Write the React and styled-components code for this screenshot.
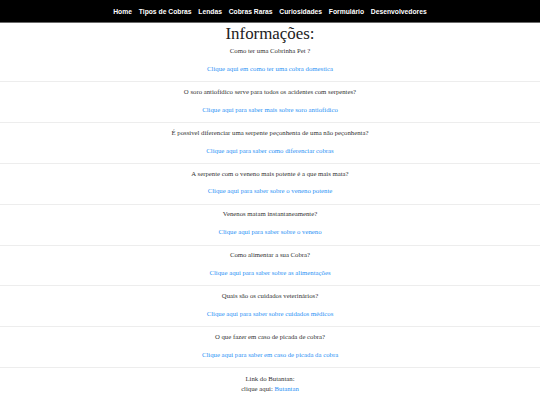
import React from "react";
import styled, { createGlobalStyle } from "styled-components";

const GlobalStyle = createGlobalStyle`
  html, body { margin: 0; padding: 0; background: #fff; }
  body { font-family: "Liberation Serif", "Times New Roman", serif; }
`;

const NavBar = styled.nav`
  height: 22px;
  background: #000;
  border-bottom: 1px solid #6a6a6a;
  display: flex;
  justify-content: center;
  align-items: center;
  gap: 6.75px;
`;

const NavLink = styled.a`
  font-family: "Liberation Sans", Arial, sans-serif;
  font-weight: bold;
  font-size: 6.75px;
  color: #fff;
  text-decoration: none;
  white-space: nowrap;
`;

const Title = styled.h1`
  margin: 0;
  padding-top: 2.7px;
  height: 15.8px;
  line-height: 15.8px;
  font-size: 16.9px;
  font-weight: normal;
  color: #222;
  text-align: center;
`;

const Section = styled.section`
  padding: 5.6px 0 8.6px;
  border-bottom: 1px solid #ededed;
  display: flex;
  flex-direction: column;
  align-items: center;
  gap: 10.1px;
`;

const Question = styled.p`
  margin: 0;
  font-size: 6.75px;
  line-height: 7.76px;
  color: #333;
  text-align: center;
`;

const Link = styled.a`
  font-size: 6.75px;
  line-height: 7.76px;
  color: #2b92f5;
  text-decoration: none;
`;

const Footer = styled.div`
  padding-top: 6px;
  display: flex;
  flex-direction: column;
  align-items: center;
`;

const FooterLine = styled.p`
  margin: 0;
  font-size: 6.75px;
  line-height: 10px;
  color: #333;
`;

const navItems = [
  "Home",
  "Tipos de Cobras",
  "Lendas",
  "Cobras Raras",
  "Curiosidades",
  "Formulário",
  "Desenvolvedores",
];

const faqs = [
  ["Como ter uma Cobrinha Pet ?", "Clique aqui em como ter uma cobra domestica"],
  [
    "O soro antiofídico serve para todos os acidentes com serpentes?",
    "Clique aqui para saber mais sobre soro antiofídico",
  ],
  [
    "É possivel diferenciar uma serpente peçonhenta de uma não peçonhenta?",
    "Clique aqui para saber como diferenciar cobras",
  ],
  [
    "A serpente com o veneno mais potente é a que mais mata?",
    "Clique aqui para saber sobre o veneno potente",
  ],
  ["Venenos matam instantaneamente?", "Clique aqui para saber sobre o veneno"],
  ["Como alimentar a sua Cobra?", "Clique aqui para saber sobre as alimentações"],
  ["Quais são os cuidados veterinários?", "Clique aqui para saber sobre cuidados médicos"],
  [
    "O que fazer em caso de picada de cobra?",
    "Clique aqui para saber em caso de picada da cobra",
  ],
];

export default function App() {
  return (
    <>
      <GlobalStyle />
      <NavBar>
        {navItems.map((n) => (
          <NavLink key={n} href="#">
            {n}
          </NavLink>
        ))}
      </NavBar>
      <Title>Informações:</Title>
      {faqs.map(([q, l]) => (
        <Section key={q}>
          <Question>{q}</Question>
          <Link href="#">{l}</Link>
        </Section>
      ))}
      <Footer>
        <FooterLine>Link do Butantan:</FooterLine>
        <FooterLine>
          clique aqui: <Link href="#">Butantan</Link>
        </FooterLine>
      </Footer>
    </>
  );
}
